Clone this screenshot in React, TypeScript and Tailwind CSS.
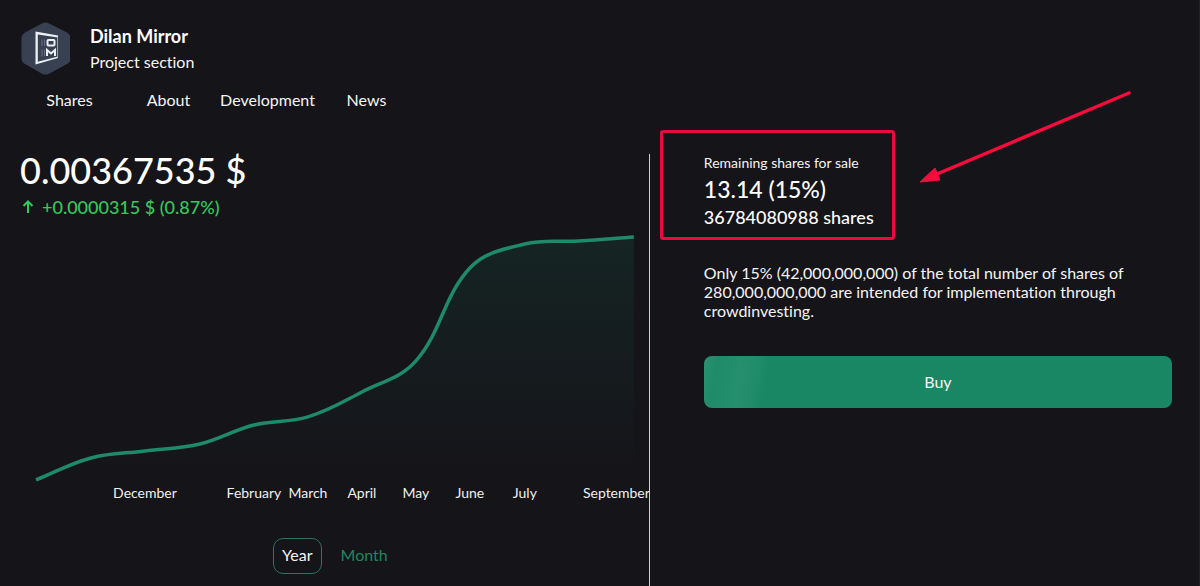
type Point = { x: number; y: number; label?: string; anchor?: "middle" | "end" };

const points: Point[] = [
  { x: 36, y: 250 },
  { x: 91, y: 228 },
  { x: 145, y: 221, label: "December" },
  { x: 200, y: 214 },
  { x: 254, y: 195, label: "February" },
  { x: 308, y: 187, label: "March" },
  { x: 362, y: 162, label: "April" },
  { x: 416, y: 131, label: "May" },
  { x: 470, y: 38, label: "June" },
  { x: 525, y: 14, label: "July" },
  { x: 579, y: 11 },
  { x: 634, y: 7, label: "September", anchor: "end" },
];

const TENSION = 0.38;

function controlPoints(i: number) {
  const cur = points[i];
  const prev = points[i - 1] ?? cur;
  const next = points[i + 1] ?? cur;
  const before = Math.hypot(cur.x - prev.x, cur.y - prev.y);
  const after = Math.hypot(next.x - cur.x, next.y - cur.y);
  const a = (TENSION * before) / (before + after);
  const b = (TENSION * after) / (before + after);
  const dx = next.x - prev.x;
  const dy = next.y - prev.y;
  return {
    in: `${cur.x - a * dx} ${cur.y - a * dy}`,
    out: `${cur.x + b * dx} ${cur.y + b * dy}`,
  };
}

const linePath = points
  .map((p, i) =>
    i === 0
      ? `M${p.x} ${p.y}`
      : `C${controlPoints(i - 1).out} ${controlPoints(i).in} ${p.x} ${p.y}`,
  )
  .join(" ");

function Logo() {
  return (
    <svg viewBox="0 0 50 54" className="h-[54px] w-[50px] shrink-0" aria-hidden="true">
      <path
        d="M22 1.400Q25.500 -.4 29 1.400L47 10.500Q50.500 12.500 50.500 16.500V36.500Q50.500 40 47 42L29 51.700Q25.500 53.500 22 51.700L5 42Q1.500 40 1.500 36.500V16.500Q1.500 12.500 5 10.500Z"
        fill="#384152"
      />
      <path d="M15.500 9.500L38 13.500V15.500L17.800 12.500V39.800L38 34.500V36L15.500 42.500Z" fill="#eef0f5" />
      <path d="M37.500 15V35.500" stroke="#9aa2b3" strokeWidth="1" />
      <path d="M22 17.500V24M24.500 17.500V24M22 27.500V34.500M24.500 27.500V34" stroke="#687187" strokeWidth="1" />
      <rect x="27.500" y="18" width="7" height="5.500" rx="1" fill="none" stroke="#eef0f5" strokeWidth="2" />
      <path d="M27 34V28L31 31.500L35 28V34" fill="none" stroke="#eef0f5" strokeWidth="2" />
    </svg>
  );
}

function PriceChart() {
  return (
    <svg viewBox="0 0 649 280" className="block h-auto w-full" role="img" aria-label="Share price by month">
      <defs>
        <linearGradient id="area" x1="0" y1="0" x2="0" y2="1">
          <stop offset="0" stopColor="#198764" stopOpacity="0.14" />
          <stop offset="1" stopColor="#198764" stopOpacity="0" />
        </linearGradient>
      </defs>
      <path d={`${linePath} L634 250 L36 250 Z`} fill="url(#area)" />
      <path d={linePath} fill="none" stroke="#1f8a68" strokeWidth="3.500" />
      {points.map(
        (p) =>
          p.label && (
            <text
              key={p.label}
              x={p.anchor === "end" ? 650 : p.x}
              y={268}
              textAnchor={p.anchor ?? "middle"}
              className="fill-[#f0f0f0] text-[14px]"
            >
              {p.label}
            </text>
          ),
      )}
    </svg>
  );
}

const tabs = ["Shares", "About", "Development", "News"];

export default function App() {
  return (
    <div className="flex min-h-screen flex-col border-r border-[#222127] bg-[#151419] font-['Lato','Open_Sans',sans-serif] text-base text-[#f5f5f5] [font-variant-ligatures:none]">
      <header className="pt-[22px] pl-5">
        <div className="flex items-start gap-5">
          <Logo />
          <div>
            <h1 className="text-[18px] leading-7 font-bold text-white">Dilan Mirror</h1>
            <p className="leading-6">Project section</p>
          </div>
        </div>
        <nav className="mt-3 flex">
          {tabs.map((tab) => (
            <a key={tab} href={`#${tab.toLowerCase()}`} className="w-[99px] text-center leading-6">
              {tab}
            </a>
          ))}
        </nav>
      </header>

      <main className="mt-[42px] flex flex-1">
        <section className="w-[54.2%] border-r border-[#d0d0d0]">
          <div className="h-[76px] pl-5">
            <p className="text-[36px] leading-8 font-medium text-white">0.00367535 $</p>
            <p className="mt-[7px] flex items-center gap-2 pl-0.5 text-[18px] leading-7 font-medium text-[#35c95b]">
              <svg viewBox="0 0 12 14" className="h-[14px] w-3" fill="none" stroke="currentColor" strokeWidth="2" aria-hidden="true">
                <path d="M6 13V2M1.500 6L6 1.500L10.500 6" />
              </svg>
              +0.0000315 $ (0.87%)
            </p>
          </div>
          <PriceChart />
          <div className="mt-7 flex items-center justify-center gap-[10px] pl-[21px]">
            <button type="button" className="h-9 rounded-[10px] border border-[#23785d] px-2 pb-0.5">
              Year
            </button>
            <button type="button" className="h-9 px-[9px] pb-0.5 text-[#23855f]">
              Month
            </button>
          </div>
        </section>

        <section className="relative -mt-6 flex-1 pr-[27px] pl-[10px]">
          <div className="w-[235px] rounded-[3px] border-3 border-[#e80c3c] pt-5 pb-2 pl-[41px]">
            <p className="text-[14px] leading-5">Remaining shares for sale</p>
            <p className="text-[23px] leading-8 font-medium text-white">13.14 (15%)</p>
            <p className="text-[18px] leading-6 font-medium text-white">36784080988 shares</p>
          </div>
          <svg viewBox="0 0 214 96" className="absolute top-[-42px] left-[269px] h-24 w-[214px]" aria-hidden="true">
            <path d="M210 5L18 86" stroke="#fb0a3d" strokeWidth="3.500" strokeLinecap="round" />
            <path d="M1 94L16 80L21 92Z" fill="#fb0a3d" stroke="#fb0a3d" strokeWidth="1" strokeLinejoin="round" />
          </svg>
          <div className="pl-11">
            <p className="mt-[23px] max-w-[430px] leading-[19px]">
              Only 15% (42,000,000,000) of the total number of shares of 280,000,000,000 are intended for
              implementation through crowdinvesting.
            </p>
            <button
              type="button"
              className="mt-9 h-[52px] w-full rounded-lg bg-[#198764] bg-[linear-gradient(100deg,#2b9270_0%,#1f8b68_3%,#268f6d_8%,#238d6a_11%,#198764_14%)]"
            >
              Buy
            </button>
          </div>
        </section>
      </main>
    </div>
  );
}
